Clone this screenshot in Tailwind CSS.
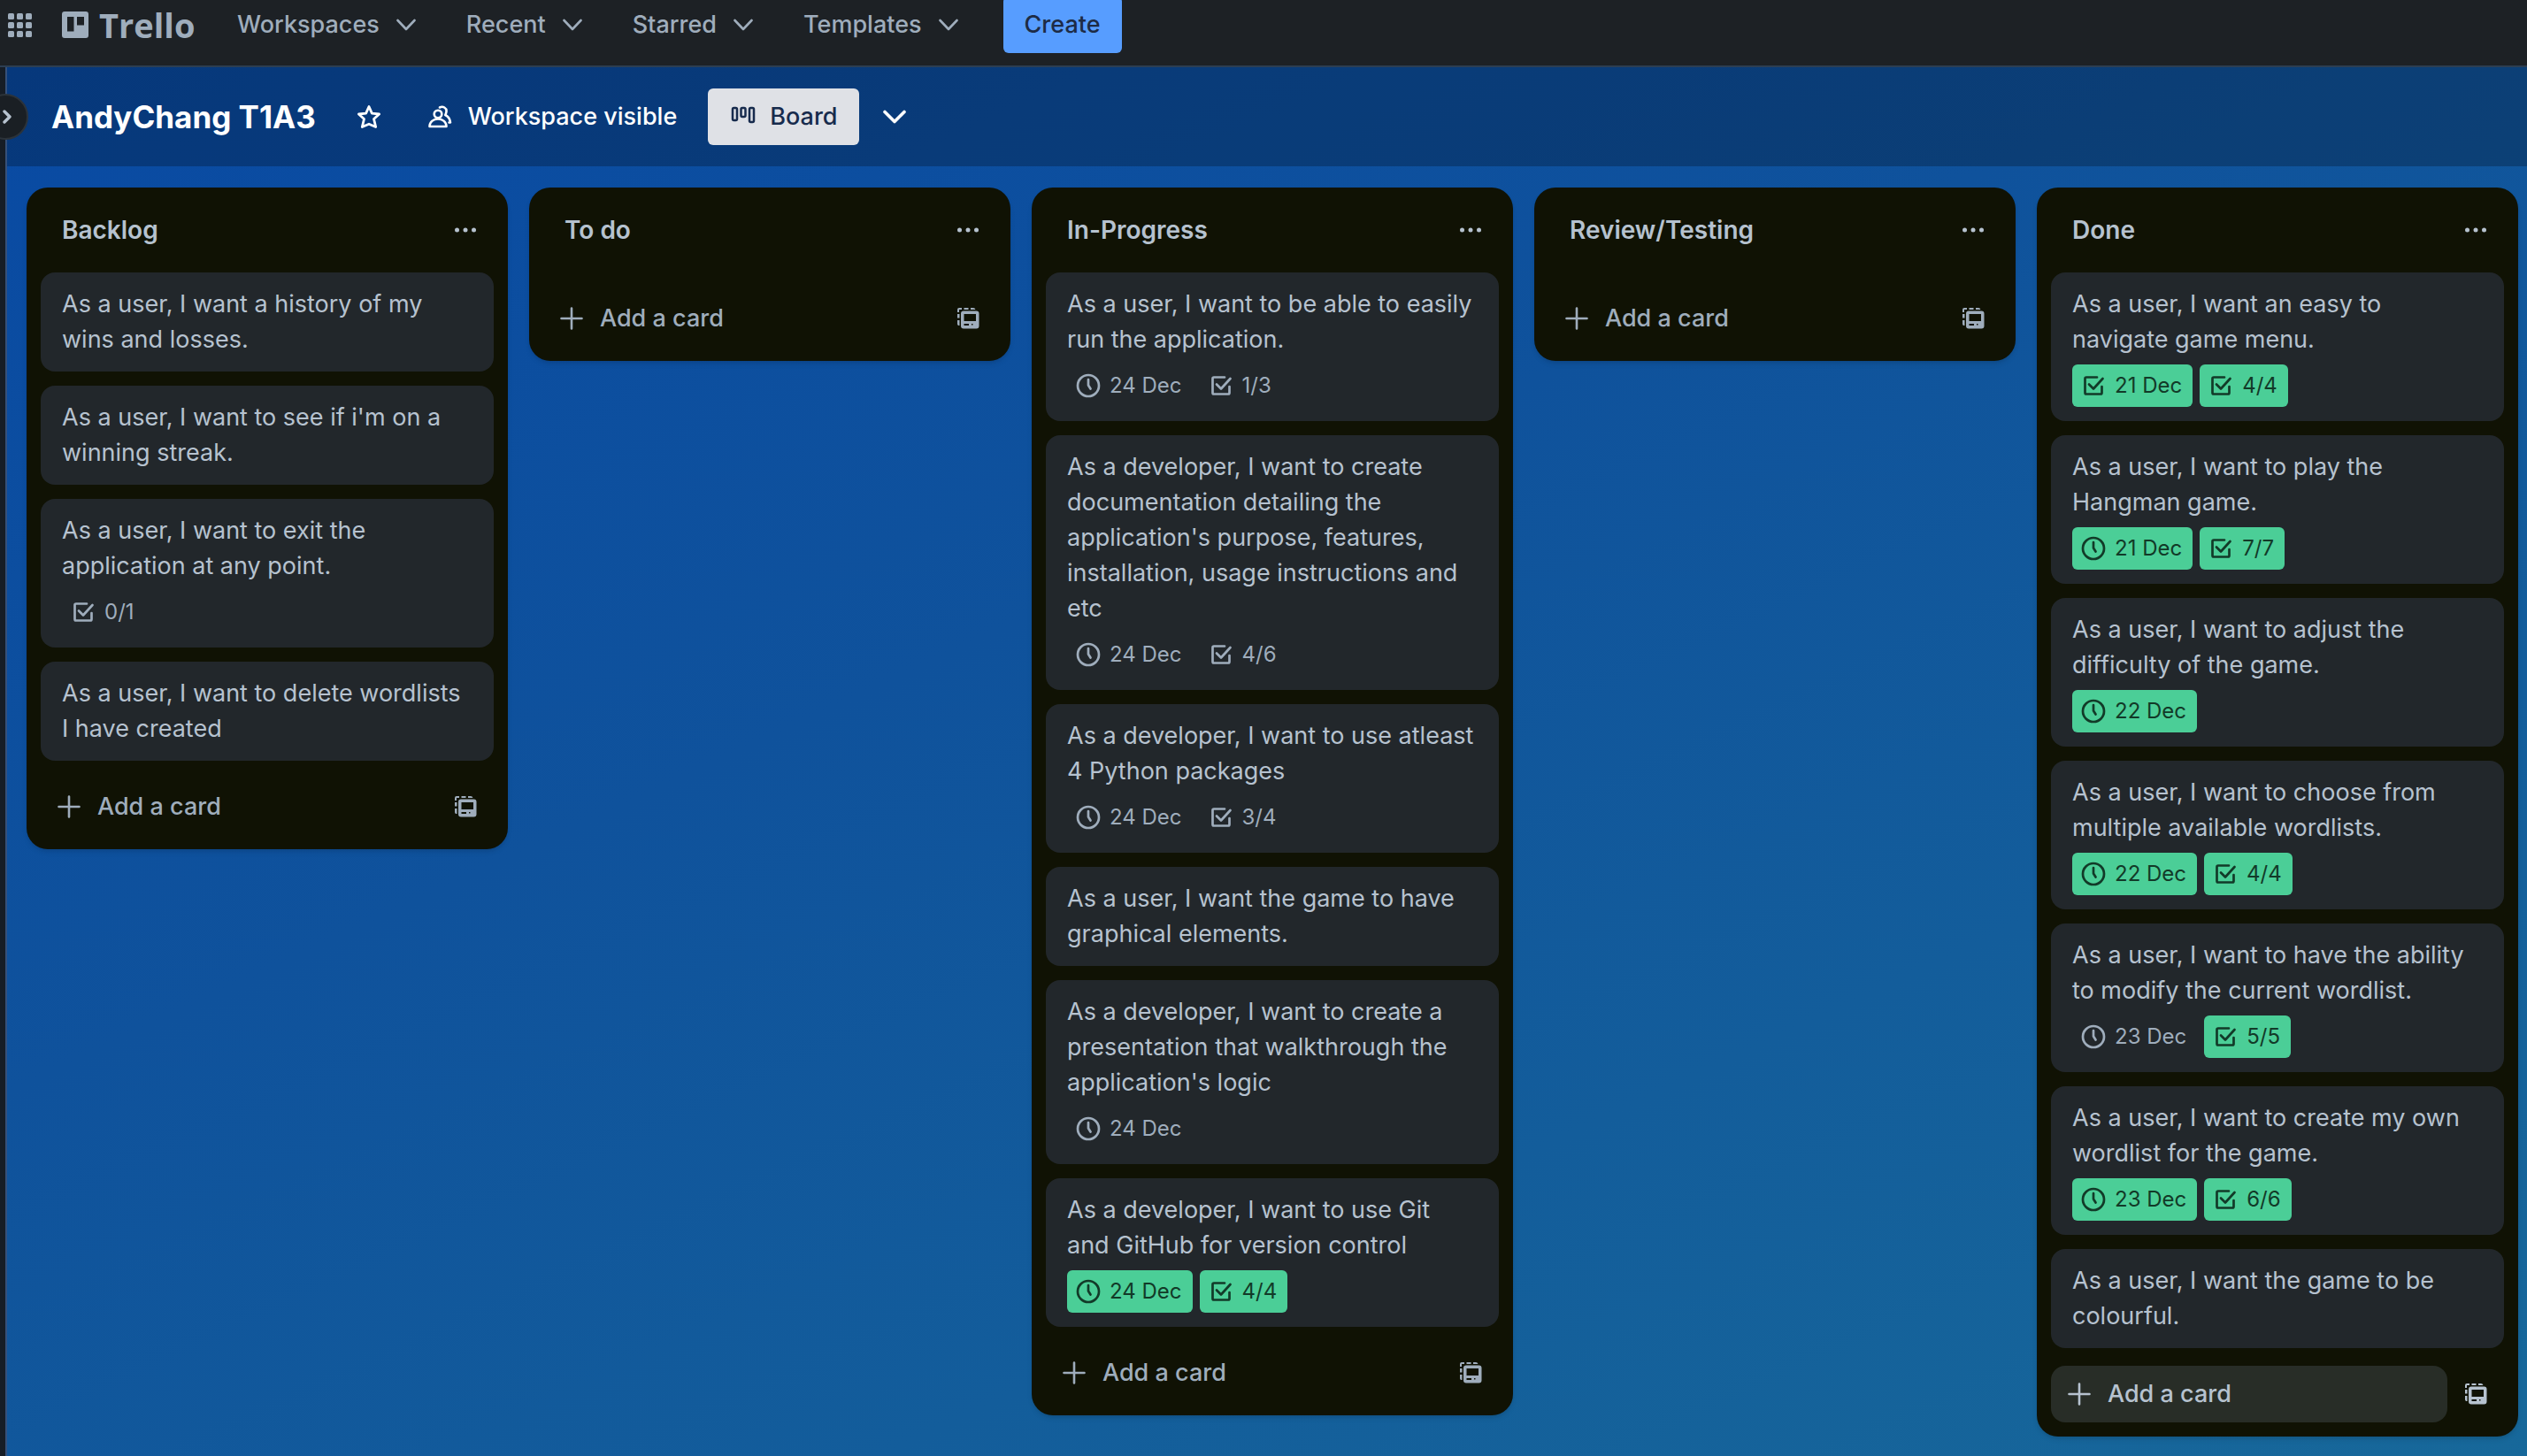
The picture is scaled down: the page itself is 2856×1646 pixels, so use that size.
<!DOCTYPE html>
<html lang="en">
<head>
<meta charset="utf-8">
<meta name="viewport" content="width=device-width, initial-scale=1">
<title>AndyChang T1A3 | Trello</title>
<script src="https://cdn.jsdelivr.net/npm/@tailwindcss/browser@4"></script>
</head>
<body class="flex min-h-screen flex-col overflow-x-hidden bg-[#1d2125] font-['Inter',sans-serif] text-[27px] leading-10 text-[#b6c2cf]">

<!-- Icon sprite -->
<svg class="hidden" aria-hidden="true">
  <symbol id="chevron" viewBox="0 0 22 14"><path d="M1.500 2 11 12 20.500 2" fill="none" stroke="currentColor" stroke-width="2.600" stroke-linecap="round" stroke-linejoin="round"/></symbol>
  <symbol id="dots" viewBox="0 0 32 32"><g fill="currentColor"><circle cx="6.500" cy="16" r="2.500"/><circle cx="16" cy="16" r="2.500"/><circle cx="25.500" cy="16" r="2.500"/></g></symbol>
  <symbol id="clock" viewBox="0 0 32 32"><g fill="none" stroke="currentColor" stroke-width="2.700" stroke-linecap="round" stroke-linejoin="round"><circle cx="16" cy="16" r="12"/><path d="M16 9v6.500l2.500 4"/></g></symbol>
  <symbol id="check" viewBox="0 0 32 32"><g fill="none" stroke="currentColor" stroke-width="2.700" stroke-linecap="round" stroke-linejoin="round"><path d="M20 6.500H8A1.500 1.500 0 0 0 6.500 8v16A1.500 1.500 0 0 0 8 25.500h16a1.500 1.500 0 0 0 1.500-1.500v-7"/><path d="m11 14.500 5 5L26.500 8"/></g></symbol>
  <symbol id="plus" viewBox="0 0 32 32"><path d="M16 4.500v23M4.500 16h23" fill="none" stroke="currentColor" stroke-width="2.600" stroke-linecap="round"/></symbol>
  <symbol id="template" viewBox="0 0 32 32"><g fill="currentColor"><path fill-rule="evenodd" d="M11 7.500h14.500A3 3 0 0 1 28.500 10.500v14a3 3 0 0 1-3 3H11a3 3 0 0 1-3-3v-14a3 3 0 0 1 3-3Zm.5 3.500v8H25v-8Zm0 11v2H17v-2Zm8.500 0v1.500h1.500V22Z"/><path d="M4 6a2 2 0 0 1 2-2h3v2H6v3H4ZM11.500 4h5v2h-5ZM19 4h3a3 3 0 0 1 2.500 2H19ZM4 11h2.500v4.500H4ZM4 18h2.500v6a2 2 0 0 1-2.500-2Z"/></g></symbol>
</svg>

<header class="h-19 border-b-2 border-[#2c3e52]">
  <nav class="-mt-1 flex h-16 items-center pl-2 font-medium text-[#9fadbc]" aria-label="Main">
    <button aria-label="Switch apps" class="w-7">
      <svg class="size-7" viewBox="0 0 28 28" fill="currentColor"><rect x="1" y="1" width="7" height="7" rx="1.500"/><rect x="11" y="1" width="7" height="7" rx="1.500"/><rect x="21" y="1" width="7" height="7" rx="1.500"/><rect x="1" y="11" width="7" height="7" rx="1.500"/><rect x="11" y="11" width="7" height="7" rx="1.500"/><rect x="21" y="11" width="7" height="7" rx="1.500"/><rect x="1" y="21" width="7" height="7" rx="1.500"/><rect x="11" y="21" width="7" height="7" rx="1.500"/><rect x="21" y="21" width="7" height="7" rx="1.500"/></svg>
    </button>
    <a href="#" class="ml-8.5 flex w-[198px] items-center gap-3 font-['Open_Sans',sans-serif] text-[38px] font-bold">
      <svg class="size-[30px]" viewBox="0 0 30 30"><path fill="currentColor" fill-rule="evenodd" d="M3 0h24a3 3 0 0 1 3 3v24a3 3 0 0 1-3 3H3a3 3 0 0 1-3-3V3a3 3 0 0 1 3-3Zm3 6v16.500h7.500V6Zm11 0v9.500h8V6Z"/></svg>
      Trello
    </a>
    <div class="flex items-center gap-[57px]">
      <button class="flex items-center gap-[19px]">Workspaces <svg class="h-3.5 w-5.5"><use href="#chevron"/></svg></button>
      <button class="flex items-center gap-[19px]">Recent <svg class="h-3.5 w-5.5"><use href="#chevron"/></svg></button>
      <button class="flex items-center gap-[19px]">Starred <svg class="h-3.5 w-5.5"><use href="#chevron"/></svg></button>
      <button class="flex items-center gap-[19px]">Templates <svg class="h-3.5 w-5.5"><use href="#chevron"/></svg></button>
    </div>
    <button class="ml-[51px] h-16 rounded-md bg-[#579dff] px-6 text-[#1d2b45]">Create</button>
  </nav>
</header>

<div class="relative flex flex-1">
  <aside class="w-2 shrink-0 border-r-2 border-[#35507a] bg-[#161d26]">
    <button aria-label="Expand sidebar" class="absolute top-[30px] -left-5 flex size-[52px] items-center justify-end rounded-full border-2 border-[#2c333a] bg-[#1a1f24] pr-4 text-[#b6c2cf]">
      <svg class="h-4 w-3" viewBox="0 0 12 16"><path d="m3 2 6 6-6 6" fill="none" stroke="currentColor" stroke-width="3.400" stroke-linecap="round" stroke-linejoin="round"/></svg>
    </button>
  </aside>

  <main class="flex min-w-0 flex-1 flex-col bg-linear-[155deg,#094aa3_0%,#0f529c_40%,#17689a_100%]">
    <div class="flex h-28 items-center bg-black/24 pl-12.5 font-medium text-white">
      <h1 class="text-[35px] font-bold">AndyChang T1A3</h1>
      <button aria-label="Star board" class="ml-11">
        <svg class="size-8" viewBox="0 0 32 32"><path d="m16 4.500 3.400 7.600 8.200.9-6.100 5.500 2.200 9-7.700-3.300-7.700 3.300 2.200-9-6.100-5.500 8.200-.9Z" fill="none" stroke="currentColor" stroke-width="2.800" stroke-linejoin="round"/></svg>
      </button>
      <button class="ml-12 flex items-center gap-4">
        <svg class="size-8" viewBox="0 0 32 32"><g fill="none" stroke="currentColor" stroke-width="2.600" stroke-linecap="round" stroke-linejoin="round"><circle cx="14" cy="13" r="4.300"/><path d="M4.500 27c0-5 4-8.500 9.500-8.500s9.500 3.500 9.500 8.500Z"/><path d="M16 5.500c3.500-2 8 .5 7.500 4.500-.2 2-.7 3-1.200 4 3.500 1.800 5.400 4.500 5.700 8.500h-1.500"/></g></svg>
        Workspace visible
      </button>
      <button class="ml-[35px] flex h-16 items-center gap-3.5 rounded-md bg-[#dfe1e6] px-6 text-[#172b4d]">
        <svg class="size-8" viewBox="0 0 32 32"><g fill="none" stroke="currentColor" stroke-width="2.500"><rect x="4" y="6" width="5" height="14" rx="1.500"/><rect x="13.500" y="6" width="5" height="10" rx="1.500"/><rect x="23" y="6" width="5" height="16" rx="1.500"/></g></svg>
        Board
      </button>
      <button aria-label="Views" class="ml-6.5">
        <svg class="h-5 w-7" viewBox="0 0 28 20"><path d="m3 4.500 11 11 11-11" fill="none" stroke="currentColor" stroke-width="3.600" stroke-linecap="round" stroke-linejoin="round"/></svg>
      </button>
    </div>

    <div class="flex flex-1 items-start gap-6 overflow-hidden px-5.5 py-6">

      <section class="w-[544px] shrink-0 rounded-3xl bg-[#101204] px-4 pb-4 shadow-md">
        <div class="flex h-24 items-center justify-between px-6"><h2 class="text-[28px] font-semibold">Backlog</h2><button aria-label="List actions" class="-mr-2"><svg class="size-8"><use href="#dots"/></svg></button></div>
        <ul class="flex flex-col gap-4">
          <li class="rounded-2xl bg-[#22272b] px-6 py-4"><p>As a user, I want a history of my wins and losses.</p></li>
          <li class="rounded-2xl bg-[#22272b] px-6 py-4"><p>As a user, I want to see if i'm on a winning streak.</p></li>
          <li class="rounded-2xl bg-[#22272b] px-6 py-4"><p>As a user, I want to exit the application at any point.</p>
            <div class="mt-2 flex gap-2 text-2xl text-[#9fadbc]"><span class="flex h-12 items-center gap-2 rounded-md pr-3 pl-2"><svg class="size-8"><use href="#check"/></svg>0/1</span></div></li>
          <li class="rounded-2xl bg-[#22272b] px-6 py-4"><p>As a user, I want to delete wordlists I have created</p></li>
        </ul>
        <div class="mt-5 flex font-medium text-[#9fadbc]"><button class="flex h-16 flex-1 items-center gap-4 rounded-2xl px-4"><svg class="size-8"><use href="#plus"/></svg>Add a card</button><button aria-label="Create from template" class="flex size-16 items-center justify-center"><svg class="size-8"><use href="#template"/></svg></button></div>
      </section>

      <section class="w-[544px] shrink-0 rounded-3xl bg-[#101204] px-4 pb-4 shadow-md">
        <div class="flex h-24 items-center justify-between px-6"><h2 class="text-[28px] font-semibold">To do</h2><button aria-label="List actions" class="-mr-2"><svg class="size-8"><use href="#dots"/></svg></button></div>
        <div class="mt-5 flex font-medium text-[#9fadbc]"><button class="flex h-16 flex-1 items-center gap-4 rounded-2xl px-4"><svg class="size-8"><use href="#plus"/></svg>Add a card</button><button aria-label="Create from template" class="flex size-16 items-center justify-center"><svg class="size-8"><use href="#template"/></svg></button></div>
      </section>

      <section class="w-[544px] shrink-0 rounded-3xl bg-[#101204] px-4 pb-4 shadow-md">
        <div class="flex h-24 items-center justify-between px-6"><h2 class="text-[28px] font-semibold">In-Progress</h2><button aria-label="List actions" class="-mr-2"><svg class="size-8"><use href="#dots"/></svg></button></div>
        <ul class="flex flex-col gap-4">
          <li class="rounded-2xl bg-[#22272b] px-6 py-4"><p>As a user, I want to be able to easily run the application.</p>
            <div class="mt-2 flex gap-2 text-2xl text-[#9fadbc]"><span class="flex h-12 items-center gap-2 rounded-md pr-3 pl-2"><svg class="size-8"><use href="#clock"/></svg>24 Dec</span><span class="flex h-12 items-center gap-2 rounded-md pr-3 pl-2"><svg class="size-8"><use href="#check"/></svg>1/3</span></div></li>
          <li class="rounded-2xl bg-[#22272b] px-6 py-4"><p>As a developer, I want to create documentation detailing the application's purpose, features, installation, usage instructions and etc</p>
            <div class="mt-2 flex gap-2 text-2xl text-[#9fadbc]"><span class="flex h-12 items-center gap-2 rounded-md pr-3 pl-2"><svg class="size-8"><use href="#clock"/></svg>24 Dec</span><span class="flex h-12 items-center gap-2 rounded-md pr-3 pl-2"><svg class="size-8"><use href="#check"/></svg>4/6</span></div></li>
          <li class="rounded-2xl bg-[#22272b] px-6 py-4"><p>As a developer, I want to use atleast 4 Python packages</p>
            <div class="mt-2 flex gap-2 text-2xl text-[#9fadbc]"><span class="flex h-12 items-center gap-2 rounded-md pr-3 pl-2"><svg class="size-8"><use href="#clock"/></svg>24 Dec</span><span class="flex h-12 items-center gap-2 rounded-md pr-3 pl-2"><svg class="size-8"><use href="#check"/></svg>3/4</span></div></li>
          <li class="rounded-2xl bg-[#22272b] px-6 py-4"><p>As a user, I want the game to have graphical elements.</p></li>
          <li class="rounded-2xl bg-[#22272b] px-6 py-4"><p>As a developer, I want to create a presentation that walkthrough the application's logic</p>
            <div class="mt-2 flex gap-2 text-2xl text-[#9fadbc]"><span class="flex h-12 items-center gap-2 rounded-md pr-3 pl-2"><svg class="size-8"><use href="#clock"/></svg>24 Dec</span></div></li>
          <li class="rounded-2xl bg-[#22272b] px-6 py-4"><p>As a developer, I want to use Git and GitHub for version control</p>
            <div class="mt-2 flex gap-2 text-2xl text-[#123a28]"><span class="flex h-12 items-center gap-2 rounded-md bg-[#4bce97] pr-3 pl-2"><svg class="size-8"><use href="#clock"/></svg>24 Dec</span><span class="flex h-12 items-center gap-2 rounded-md bg-[#4bce97] pr-3 pl-2"><svg class="size-8"><use href="#check"/></svg>4/4</span></div></li>
        </ul>
        <div class="mt-5 flex font-medium text-[#9fadbc]"><button class="flex h-16 flex-1 items-center gap-4 rounded-2xl px-4"><svg class="size-8"><use href="#plus"/></svg>Add a card</button><button aria-label="Create from template" class="flex size-16 items-center justify-center"><svg class="size-8"><use href="#template"/></svg></button></div>
      </section>

      <section class="w-[544px] shrink-0 rounded-3xl bg-[#101204] px-4 pb-4 shadow-md">
        <div class="flex h-24 items-center justify-between px-6"><h2 class="text-[28px] font-semibold">Review/Testing</h2><button aria-label="List actions" class="-mr-2"><svg class="size-8"><use href="#dots"/></svg></button></div>
        <div class="mt-5 flex font-medium text-[#9fadbc]"><button class="flex h-16 flex-1 items-center gap-4 rounded-2xl px-4"><svg class="size-8"><use href="#plus"/></svg>Add a card</button><button aria-label="Create from template" class="flex size-16 items-center justify-center"><svg class="size-8"><use href="#template"/></svg></button></div>
      </section>

      <section class="w-[544px] shrink-0 rounded-3xl bg-[#101204] px-4 pb-4 shadow-md">
        <div class="flex h-24 items-center justify-between px-6"><h2 class="text-[28px] font-semibold">Done</h2><button aria-label="List actions" class="-mr-2"><svg class="size-8"><use href="#dots"/></svg></button></div>
        <ul class="flex flex-col gap-4">
          <li class="rounded-2xl bg-[#22272b] px-6 py-4"><p>As a user, I want an easy to navigate game menu.</p>
            <div class="mt-2 flex gap-2 text-2xl text-[#123a28]"><span class="flex h-12 items-center gap-2 rounded-md bg-[#4bce97] pr-3 pl-2"><svg class="size-8"><use href="#check"/></svg>21 Dec</span><span class="flex h-12 items-center gap-2 rounded-md bg-[#4bce97] pr-3 pl-2"><svg class="size-8"><use href="#check"/></svg>4/4</span></div></li>
          <li class="rounded-2xl bg-[#22272b] px-6 py-4"><p>As a user, I want to play the Hangman game.</p>
            <div class="mt-2 flex gap-2 text-2xl text-[#123a28]"><span class="flex h-12 items-center gap-2 rounded-md bg-[#4bce97] pr-3 pl-2"><svg class="size-8"><use href="#clock"/></svg>21 Dec</span><span class="flex h-12 items-center gap-2 rounded-md bg-[#4bce97] pr-3 pl-2"><svg class="size-8"><use href="#check"/></svg>7/7</span></div></li>
          <li class="rounded-2xl bg-[#22272b] px-6 py-4"><p>As a user, I want to adjust the difficulty of the game.</p>
            <div class="mt-2 flex gap-2 text-2xl text-[#123a28]"><span class="flex h-12 items-center gap-2 rounded-md bg-[#4bce97] pr-3 pl-2"><svg class="size-8"><use href="#clock"/></svg>22 Dec</span></div></li>
          <li class="rounded-2xl bg-[#22272b] px-6 py-4"><p>As a user, I want to choose from multiple available wordlists.</p>
            <div class="mt-2 flex gap-2 text-2xl text-[#123a28]"><span class="flex h-12 items-center gap-2 rounded-md bg-[#4bce97] pr-3 pl-2"><svg class="size-8"><use href="#clock"/></svg>22 Dec</span><span class="flex h-12 items-center gap-2 rounded-md bg-[#4bce97] pr-3 pl-2"><svg class="size-8"><use href="#check"/></svg>4/4</span></div></li>
          <li class="rounded-2xl bg-[#22272b] px-6 py-4"><p>As a user, I want to have the ability to modify the current wordlist.</p>
            <div class="mt-2 flex gap-2 text-2xl text-[#123a28]"><span class="flex h-12 items-center gap-2 rounded-md pr-3 pl-2 text-[#9fadbc]"><svg class="size-8"><use href="#clock"/></svg>23 Dec</span><span class="flex h-12 items-center gap-2 rounded-md bg-[#4bce97] pr-3 pl-2"><svg class="size-8"><use href="#check"/></svg>5/5</span></div></li>
          <li class="rounded-2xl bg-[#22272b] px-6 py-4"><p>As a user, I want to create my own wordlist for the game.</p>
            <div class="mt-2 flex gap-2 text-2xl text-[#123a28]"><span class="flex h-12 items-center gap-2 rounded-md bg-[#4bce97] pr-3 pl-2"><svg class="size-8"><use href="#clock"/></svg>23 Dec</span><span class="flex h-12 items-center gap-2 rounded-md bg-[#4bce97] pr-3 pl-2"><svg class="size-8"><use href="#check"/></svg>6/6</span></div></li>
          <li class="rounded-2xl bg-[#22272b] px-6 py-4"><p>As a user, I want the game to be colourful.</p></li>
        </ul>
        <div class="mt-5 flex font-medium text-[#b6c2cf]"><button class="flex h-16 flex-1 items-center gap-4 rounded-2xl bg-[#282d27] px-4"><svg class="size-8"><use href="#plus"/></svg>Add a card</button><button aria-label="Create from template" class="flex size-16 items-center justify-center"><svg class="size-8"><use href="#template"/></svg></button></div>
      </section>

    </div>
  </main>
</div>
</body>
</html>
